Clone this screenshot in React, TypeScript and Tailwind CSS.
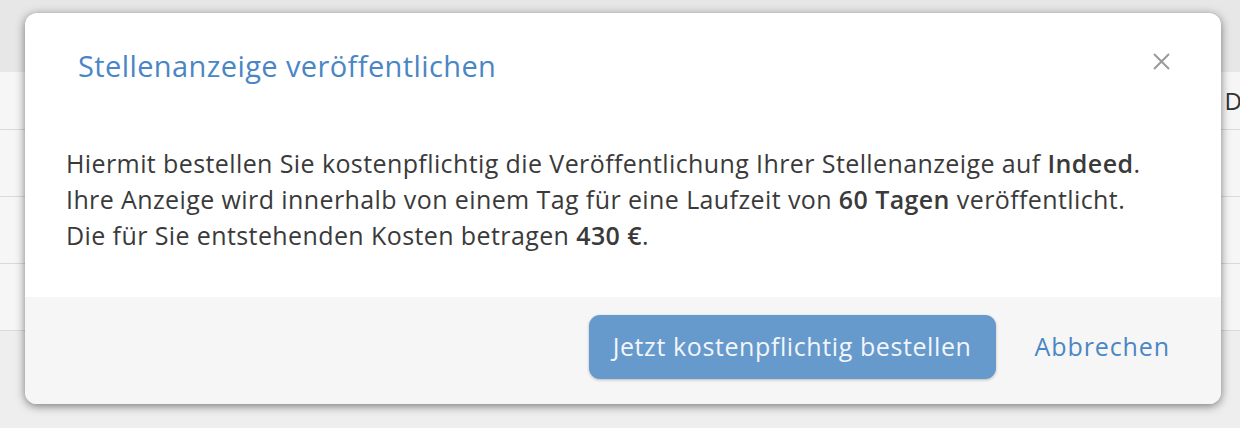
import React from 'react';

const rows = [0, 1, 2];

export default function App() {
    return (
        <div className="relative h-[428px] w-[1240px] overflow-hidden bg-[#eeeeee]" style={{ fontFamily: '"Open Sans", sans-serif' }}>
            {/* Dimmed page underneath */}
            <div className="flex flex-col">
                <div className="h-[72px] bg-[#e7e7e7]" />
                <div className="flex h-[58px] items-center justify-end border-b border-[#dadada] bg-[#f6f6f6]">
                    <span className="mr-[-2px] text-[24px] text-[#333]">D</span>
                </div>
                {rows.map((r) => (
                    <div key={r} className="h-[67px] border-b border-[#dadada] bg-[#f6f6f6]" />
                ))}
            </div>

            {/* Modal */}
            <div className="absolute left-[25px] top-[13px] flex h-[391px] w-[1196px] flex-col overflow-hidden rounded-[12px] bg-white shadow-[0_2px_10px_rgba(0,0,0,0.5)]">
                <div className="flex items-start justify-between pl-[53px] pr-[50px] pt-[34px]">
                    <h2 className="text-[29px] leading-[38px] tracking-[0.4px] text-[#4a86c5]">Stellenanzeige veröffentlichen</h2>
                    <button className="mt-[5px] text-[#9a9a9a]" aria-label="Schließen">
                        <svg width="19" height="19" viewBox="0 0 19 19" fill="none" stroke="currentColor" strokeWidth="2">
                            <path d="M2 2 L17 17 M17 2 L2 17" />
                        </svg>
                    </button>
                </div>
                <div className="flex-1 px-[41px] pt-[60px] text-[25px] leading-[36px] tracking-[0.4px] text-[#3a3a3a]">
                    <p>Hiermit bestellen Sie kostenpflichtig die Veröffentlichung Ihrer Stellenanzeige auf <b className="font-semibold">Indeed</b>.</p>
                    <p>Ihre Anzeige wird innerhalb von einem Tag für eine Laufzeit von <b className="font-semibold">60 Tagen</b> veröffentlicht.</p>
                    <p>Die für Sie entstehenden Kosten betragen <b className="font-semibold">430 €</b>.</p>
                </div>
                <div className="flex h-[107px] items-start justify-end gap-[39px] bg-[#f6f6f6] pr-[51px] pt-[18px]">
                    <button className="h-[64px] w-[407px] rounded-[11px] bg-[#6699cc] text-[25px] tracking-[0.6px] text-[#f2f6fb] shadow-[0_1px_3px_rgba(0,0,0,0.25)]">
                        Jetzt kostenpflichtig bestellen
                    </button>
                    <button className="h-[64px] text-[25px] tracking-[0.9px] text-[#4a86c5]">Abbrechen</button>
                </div>
            </div>
        </div>
    );
}
